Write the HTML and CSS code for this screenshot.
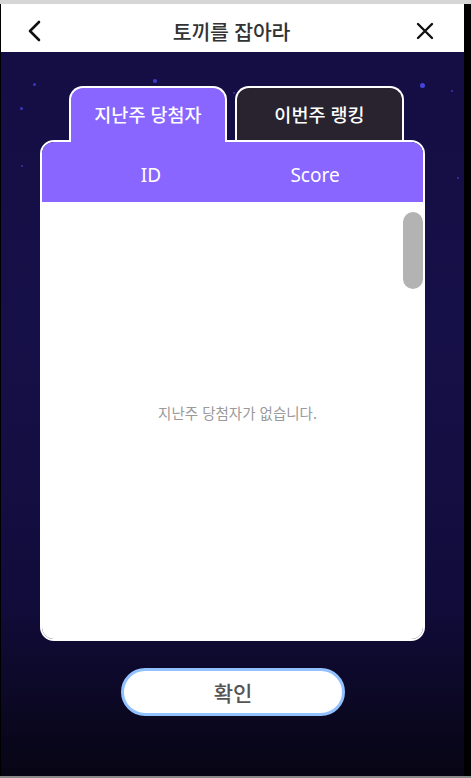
FILE: index.html
```html
<!DOCTYPE html>
<html lang="ko">
<head>
<meta charset="utf-8">
<title>토끼를 잡아라</title>
<link rel="stylesheet" href="styles.css">
</head>
<body>
<div class="chrome-top"></div>
<div class="app">
  <header class="header">
    <button class="icon-btn back" aria-label="뒤로">
      <svg width="16" height="22" viewBox="0 0 16 22"><polyline points="12,2 3,11 12,20" fill="none" stroke="#111" stroke-width="2.6" stroke-linecap="round" stroke-linejoin="round"/></svg>
    </button>
    <h1 class="title">토끼를 잡아라</h1>
    <button class="icon-btn close" aria-label="닫기">
      <svg width="18" height="18" viewBox="0 0 18 18"><path d="M2 2 L16 16 M16 2 L2 16" fill="none" stroke="#111" stroke-width="2.4" stroke-linecap="round"/></svg>
    </button>
  </header>
  <main class="stage">
    <span class="star s1"></span><span class="star s2"></span><span class="star s3"></span>
    <span class="star s4"></span><span class="star s5"></span><span class="star s6"></span>
    <span class="star s7"></span><span class="star s8"></span><span class="star s9"></span>
    <span class="star big s10"></span>
    <div class="tabs">
      <div class="tab active">지난주 당첨자</div>
      <div class="tab">이번주 랭킹</div>
    </div>
    <section class="panel">
      <div class="cols">
        <span class="col-id">ID</span>
        <span class="col-score">Score</span>
      </div>
      <div class="list">
        <p class="empty">지난주 당첨자가 없습니다.</p>
        <div class="thumb"></div>
      </div>
    </section>
    <button class="confirm">확인</button>
  </main>
</div>
<div class="chrome-bottom"></div>
</body>
</html>
```
FILE: styles.css
```css
* { box-sizing: border-box; }
html, body { margin: 0; padding: 0; }
body {
  width: 471px;
  height: 778px;
  background: #000;
  font-family: "Noto Sans CJK KR", "Noto Sans", sans-serif;
  overflow: hidden;
}
.chrome-top { height: 4px; background: #d6d6d6; }
.chrome-bottom { height: 2px; background: #8a8a8a; }
.app {
  width: 463px;
  margin-left: 1px;
  height: 772px;
  display: flex;
  flex-direction: column;
}
.header {
  height: 48px;
  background: #fff;
  display: flex;
  align-items: center;
  justify-content: space-between;
  padding: 0 30px 0 26px;
}
.icon-btn {
  border: 0;
  background: none;
  padding: 0;
  display: flex;
  align-items: center;
  justify-content: center;
}
.back { margin-top: 6px; }
.close { margin-top: 6px; }
.title {
  margin: 6px 0 0 4px;
  font-size: 20.5px;
  font-weight: 500;
  color: #333;
  letter-spacing: -0.2px;
}
.stage {
  flex: 1;
  position: relative;
  background: linear-gradient(180deg, #140e45 0%, #161048 40%, #120c3c 75%, #070514 100%);
  display: flex;
  flex-direction: column;
  padding-top: 34px;
}
.star {
  position: absolute;
  width: 3px; height: 3px;
  border-radius: 50%;
  background: #3a38b8;
}
.star.big { width: 5px; height: 5px; background: #4140c8; box-shadow: 0 0 4px #4140c8; }
.s1 { left: 152px; top: 27px; width: 4px; height: 4px; background: #3c3ad0; }
.s2 { left: 32px; top: 31px; }
.s3 { left: 419px; top: 31px; width: 5px; height: 5px; background: #4544d4; }
.s4 { left: 19px; top: 55px; }
.s5 { left: 450px; top: 38px; width: 2px; height: 2px; }
.s6 { left: 20px; top: 113px; width: 2px; height: 2px; }
.s7 { left: 411px; top: 129px; width: 2px; height: 2px; }
.s8 { left: 456px; top: 125px; width: 2px; height: 2px; }
.s9 { left: 232px; top: 40px; width: 2px; height: 2px; }
.s10 { left: 61px; top: 125px; }
.tabs {
  display: flex;
  gap: 8px;
  margin-left: 68px;
  position: relative;
  z-index: 2;
  height: 56px;
  margin-bottom: -2px;
}
.tab {
  height: 54px;
  border: 2px solid #fff;
  border-bottom: 0;
  border-radius: 14px 14px 0 0;
  background: #28232f;
  color: #fff;
  font-size: 18.5px;
  font-weight: 500;
  display: flex;
  align-items: center;
  justify-content: center;
  padding-bottom: 0;
  width: 169px;
}
.tab.active {
  background: #8866ff;
  width: 158px;
  height: 56px;
  padding-bottom: 2px;
}
.panel {
  margin-left: 39px;
  width: 385px;
  height: 501px;
  border: 2px solid #fff;
  border-radius: 14px;
  overflow: hidden;
  display: flex;
  flex-direction: column;
  position: relative;
  z-index: 1;
}
.cols {
  height: 60px;
  background: #8866ff;
  color: #fff;
  font-family: "Noto Sans", sans-serif;
  font-size: 19px;
  display: flex;
  align-items: center;
  flex-shrink: 0;
  padding-top: 5px;
}
.col-id { width: 218px; text-align: center; }
.col-score { width: 110px; text-align: center; }
.list {
  flex: 1;
  background: #fff;
  position: relative;
  display: flex;
  align-items: center;
  justify-content: center;
}
.empty {
  margin: 0 0 16px 10px;
  font-size: 14.5px;
  color: #9a9a9a;
}
.thumb {
  position: absolute;
  right: 0;
  top: 10px;
  width: 20px;
  height: 77px;
  border-radius: 10px;
  background: #b3b3b3;
}
.confirm {
  align-self: flex-start;
  margin: 27px 0 0 120px;
  width: 224px;
  height: 48px;
  border: 3px solid #92c1ff;
  border-radius: 24px;
  background: #fff;
  color: #555;
  font-family: "Noto Sans CJK KR", sans-serif;
  font-size: 21px;
  font-weight: 500;
  padding: 0;
}
```
